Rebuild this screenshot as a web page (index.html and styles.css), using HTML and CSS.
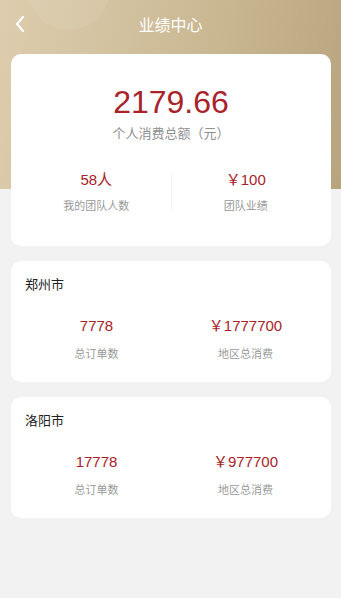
FILE: index.html
```html
<!DOCTYPE html>
<html lang="zh">
<head>
    <meta charset="UTF-8">
    <meta name="viewport" content="width=device-width, initial-scale=1.0">
    <title>业绩中心</title>
    <link rel="stylesheet" href="styles.css">
</head>
<body>
    <!-- 顶部背景 -->
    <div class="header-bg">
        <div class="deco-circle"></div>
        <div class="nav-bar">
            <svg class="back-icon" width="12" height="18" viewBox="0 0 12 18">
                <path d="M9 2 L3 9 L9 16" fill="none" stroke="#fff" stroke-width="2.2" stroke-linecap="round" stroke-linejoin="round"/>
            </svg>
            <span class="nav-title">业绩中心</span>
        </div>
    </div>

    <div class="page">
        <!-- 个人业绩 -->
        <div class="card summary-card">
            <div class="total-amount">2179.66</div>
            <div class="total-label">个人消费总额（元）</div>
            <div class="stats-row">
                <div class="stat">
                    <div class="stat-value">58人</div>
                    <div class="stat-label">我的团队人数</div>
                </div>
                <div class="divider"></div>
                <div class="stat">
                    <div class="stat-value">￥100</div>
                    <div class="stat-label">团队业绩</div>
                </div>
            </div>
        </div>

        <!-- 地区列表 -->
        <div class="card city-card">
            <div class="city-name">郑州市</div>
            <div class="city-row">
                <div class="stat">
                    <div class="stat-value">7778</div>
                    <div class="stat-label">总订单数</div>
                </div>
                <div class="stat">
                    <div class="stat-value">￥1777700</div>
                    <div class="stat-label">地区总消费</div>
                </div>
            </div>
        </div>

        <div class="card city-card">
            <div class="city-name">洛阳市</div>
            <div class="city-row">
                <div class="stat">
                    <div class="stat-value">17778</div>
                    <div class="stat-label">总订单数</div>
                </div>
                <div class="stat">
                    <div class="stat-value">￥977700</div>
                    <div class="stat-label">地区总消费</div>
                </div>
            </div>
        </div>
    </div>
</body>
</html>
```

FILE: styles.css
```css
/* 基础 */
body {
    margin: 0;
    padding: 0;
    background: #f2f2f2;
    font-family: 'Liberation Sans', 'Noto Sans CJK SC', sans-serif;
    width: 341px;
    min-height: 598px;
    position: relative;
    overflow: hidden;
}

/* 顶部 */
.header-bg {
    height: 189px;
    background: linear-gradient(100deg, #ddcdae 0%, #cdbb97 50%, #b8a57e 100%);
    position: relative;
    overflow: hidden;
}

.deco-circle {
    position: absolute;
    left: 28px;
    top: -52px;
    width: 82px;
    height: 82px;
    border-radius: 50%;
    background: rgba(255, 255, 255, 0.07);
}

.nav-bar {
    height: 48px;
    display: flex;
    align-items: center;
    justify-content: center;
    position: relative;
}

.back-icon {
    position: absolute;
    left: 14px;
    top: 15px;
}

.nav-title {
    color: #fff;
    font-size: 16px;
}

/* 内容 */
.page {
    margin-top: -135px;
    padding: 0 10px 0 11px;
    display: flex;
    flex-direction: column;
    gap: 15px;
    position: relative;
}

.card {
    background: #fff;
    border-radius: 10px;
}

.summary-card {
    height: 192px;
    padding-top: 29px;
    box-sizing: border-box;
    text-align: center;
}

.total-amount {
    color: #a8232a;
    font-size: 32px;
    line-height: 38px;
}

.total-label {
    color: #8f8f8f;
    font-size: 13px;
    line-height: 20px;
    margin-top: 3px;
}

.stats-row {
    display: flex;
    align-items: center;
    margin-top: 26px;
    padding: 0 11px;
}

.stats-row .stat {
    flex: 1;
}

.divider {
    width: 1px;
    height: 38px;
    background: #f2f2f2;
}

.stat {
    text-align: center;
}

.stat-value {
    color: #a8232a;
    font-size: 15px;
    line-height: 20px;
}

.stat-label {
    color: #999;
    font-size: 11px;
    line-height: 16px;
    margin-top: 8px;
}

/* 城市 */
.city-card {
    height: 121px;
    padding: 14px 11px 0 14px;
    box-sizing: border-box;
}

.city-name {
    color: #222;
    font-size: 13px;
    line-height: 20px;
}

.city-row {
    display: flex;
    margin-top: 21px;
    margin-left: -3px;
}

.city-row .stat {
    flex: 1;
}

.city-row .stat-label {
    margin-top: 10px;
}
```
